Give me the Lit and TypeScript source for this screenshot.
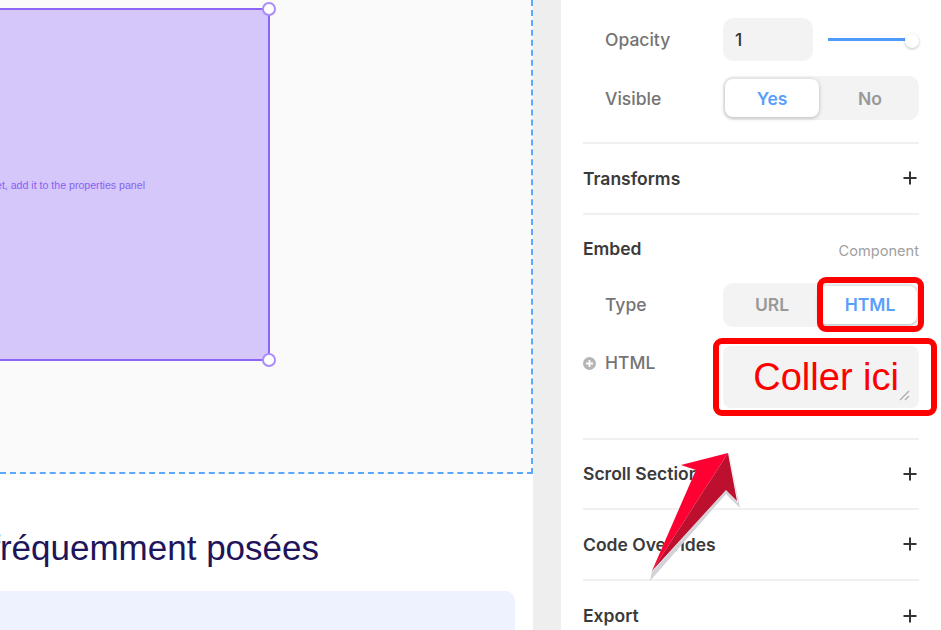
import { LitElement, html, css } from "lit";
import { customElement } from "lit/decorators.js";

const plus = html`<svg class="plus" width="16" height="16" viewBox="0 0 16 16">
  <path d="M8 1.5v13M1.5 8h13" stroke="#333" stroke-width="2" fill="none" />
</svg>`;

@customElement("app-root")
export class AppRoot extends LitElement {
  static styles = css`
    :host {
      display: block;
      width: 941px;
      height: 630px;
      overflow: hidden;
      position: relative;
      background: #fff;
      font-family: Inter, "Liberation Sans", sans-serif;
    }
    .page {
      display: flex;
      height: 630px;
    }
    .left {
      width: 533px;
      flex: none;
      display: flex;
      flex-direction: column;
      overflow: hidden;
    }
    .canvas {
      box-sizing: border-box;
      height: 474px;
      padding-top: 8px;
      background: #fafafa;
      border-right: 2px dashed #5ba8ff;
      border-bottom: 2px dashed #5ba8ff;
    }
    .embed {
      box-sizing: border-box;
      position: relative;
      width: 270px;
      height: 353px;
      background: #d6c7fb;
      border-top: 2px solid #8b66f6;
      border-bottom: 2px solid #8b66f6;
      border-right: 2px solid #8b66f6;
      display: flex;
      align-items: center;
      justify-content: flex-end;
      padding-right: 123px;
    }
    .embed span {
      white-space: nowrap;
      font: 10.6px/12px "Liberation Sans", sans-serif;
      color: #8561f4;
    }
    .handle {
      position: absolute;
      right: -8px;
      box-sizing: border-box;
      width: 14px;
      height: 14px;
      border-radius: 50%;
      background: #fff;
      border: 2px solid #a98cf8;
    }
    .handle.top {
      top: -8px;
    }
    .handle.bottom {
      bottom: -8px;
    }
    .title {
      margin: 54px 0 0;
      width: 319px;
      display: flex;
      justify-content: flex-end;
      white-space: nowrap;
      font: 400 35px/40px "Liberation Sans", sans-serif;
      color: #20145a;
    }
    .card {
      margin-top: 23px;
      width: 515px;
      flex: 1;
      background: #eef2fe;
      border-top-right-radius: 10px;
    }
    .gutter {
      width: 28px;
      flex: none;
      background: #eeeeee;
    }
    .panel {
      flex: 1;
      box-sizing: border-box;
      padding: 18px 22px 0;
    }
    .row {
      display: grid;
      grid-template-columns: 140px 196px;
      align-items: center;
    }
    .row + .row {
      margin-top: 15px;
    }
    .label {
      padding-left: 22px;
      font-size: 17.5px;
      font-weight: 500;
      color: #747474;
    }
    .input {
      box-sizing: border-box;
      width: 90px;
      height: 43px;
      padding-left: 12px;
      display: flex;
      align-items: center;
      border-radius: 10px;
      background: #f3f3f3;
      font-size: 17.5px;
      font-weight: 500;
      color: #333;
    }
    .opacity {
      display: flex;
      align-items: center;
    }
    .track {
      margin-left: 15px;
      width: 77px;
      height: 3px;
      background: #4d9bfb;
    }
    .thumb {
      width: 14px;
      height: 14px;
      margin-top: 2px;
      border-radius: 50%;
      background: #fff;
      box-shadow: 0 1px 3px rgba(0, 0, 0, 0.25);
    }
    .seg {
      box-sizing: border-box;
      height: 44px;
      padding: 3px 2px;
      display: grid;
      grid-template-columns: 94px 98px;
      border-radius: 10px;
      background: #f3f3f3;
      font-size: 17.5px;
      font-weight: 600;
      color: #999;
    }
    .seg div {
      display: flex;
      align-items: center;
      justify-content: center;
      border-radius: 8px;
    }
    .seg div:last-child {
      padding-left: 4px;
    }
    .seg .on {
      background: #fff;
      color: #5aa0fb;
      box-shadow: 0 1px 4px rgba(0, 0, 0, 0.25);
    }
    .group {
      padding-bottom: 22px;
      border-bottom: 2px solid #f0f0f0;
    }
    .section {
      box-sizing: border-box;
      height: 70.5px;
      display: flex;
      align-items: center;
      justify-content: space-between;
      border-bottom: 2px solid #f0f0f0;
      font-size: 17.5px;
      font-weight: 600;
      color: #3a3a3a;
    }
    .section:last-child {
      border-bottom: 0;
    }
    .section .plus {
      margin-right: 1px;
    }
    .embedgroup {
      box-sizing: border-box;
      height: 225px;
      padding-top: 23px;
      border-bottom: 2px solid #f0f0f0;
    }
    .head {
      display: flex;
      justify-content: space-between;
      align-items: flex-end;
      margin-bottom: 23px;
      font-size: 17.5px;
      line-height: 22px;
      font-weight: 600;
      color: #3a3a3a;
    }
    .head span {
      font-size: 14.6px;
      line-height: 18px;
      font-weight: 400;
      color: #a0a0a0;
    }
    .embedgroup .row.code {
      margin-top: 19px;
      align-items: start;
    }
    .code .label {
      position: relative;
      line-height: 34px;
    }
    .dot {
      position: absolute;
      left: 0;
      top: 11px;
      width: 13px;
      height: 13px;
    }
    .area {
      box-sizing: border-box;
      position: relative;
      height: 62px;
      padding: 10px 20px 0 0;
      text-align: right;
      border-radius: 8px;
      background: #f3f3f3;
      font: 38px/42px "Liberation Sans", sans-serif;
      color: #ff0000;
    }
    .grip {
      position: absolute;
      right: 9px;
      bottom: 7px;
    }
    .mark {
      position: absolute;
      box-sizing: border-box;
      border: 6px solid #ff0000;
      border-radius: 9px;
    }
    .mark.one {
      left: 817px;
      top: 277px;
      width: 107px;
      height: 55px;
    }
    .mark.two {
      left: 713px;
      top: 338px;
      width: 224px;
      height: 78px;
    }
    .arrow {
      position: absolute;
      left: 640px;
      top: 445px;
    }
  `;

  render() {
    return html`
      <div class="page">
        <div class="left">
          <div class="canvas">
            <div class="embed">
              <span>To embed a website or widget, add it to the properties panel</span>
              <div class="handle top"></div>
              <div class="handle bottom"></div>
            </div>
          </div>
          <h2 class="title"><span>Questions fréquemment posées</span></h2>
          <div class="card"></div>
        </div>
        <div class="gutter"></div>
        <div class="panel">
          <div class="group">
            <div class="row">
              <div class="label">Opacity</div>
              <div class="opacity">
                <div class="input">1</div>
                <div class="track"></div>
                <div class="thumb"></div>
              </div>
            </div>
            <div class="row">
              <div class="label">Visible</div>
              <div class="seg">
                <div class="on">Yes</div>
                <div>No</div>
              </div>
            </div>
          </div>
          <div class="section">Transforms ${plus}</div>
          <div class="embedgroup">
            <div class="head">Embed <span>Component</span></div>
            <div class="row">
              <div class="label">Type</div>
              <div class="seg">
                <div>URL</div>
                <div class="on">HTML</div>
              </div>
            </div>
            <div class="row code">
              <div class="label">
                <svg class="dot" viewBox="0 0 13 13">
                  <circle cx="6.5" cy="6.5" r="6.5" fill="#b5b5b5" />
                  <path d="M6.5 3v7M3 6.5h7" stroke="#fff" stroke-width="1.8" />
                </svg>
                HTML
              </div>
              <div class="area">
                Coller ici
                <svg class="grip" width="11" height="11" viewBox="0 0 11 11">
                  <path d="M1 10 10 1M6 10l4-4" stroke="#aaa" stroke-width="1.2" fill="none" />
                </svg>
              </div>
            </div>
          </div>
          <div class="section">Scroll Section ${plus}</div>
          <div class="section">Code Overrides ${plus}</div>
          <div class="section">Export ${plus}</div>
        </div>
      </div>
      <div class="mark one"></div>
      <div class="mark two"></div>
      <svg class="arrow" width="110" height="145" viewBox="640 445 110 145">
        <path d="M729 453 740 508 726 494 650 581 652 571 696 470 681 465Z" fill="#d2d2d8" />
        <path d="M729 453 738 503 726 490 652 572 697 470 681 465Z" fill="#fff" />
        <path d="M728 453 681 465 696 470 652 571Z" fill="#ff0033" />
        <path d="M728 453 652 571 726 490 737 501Z" fill="#bd102e" />
      </svg>
    `;
  }
}
